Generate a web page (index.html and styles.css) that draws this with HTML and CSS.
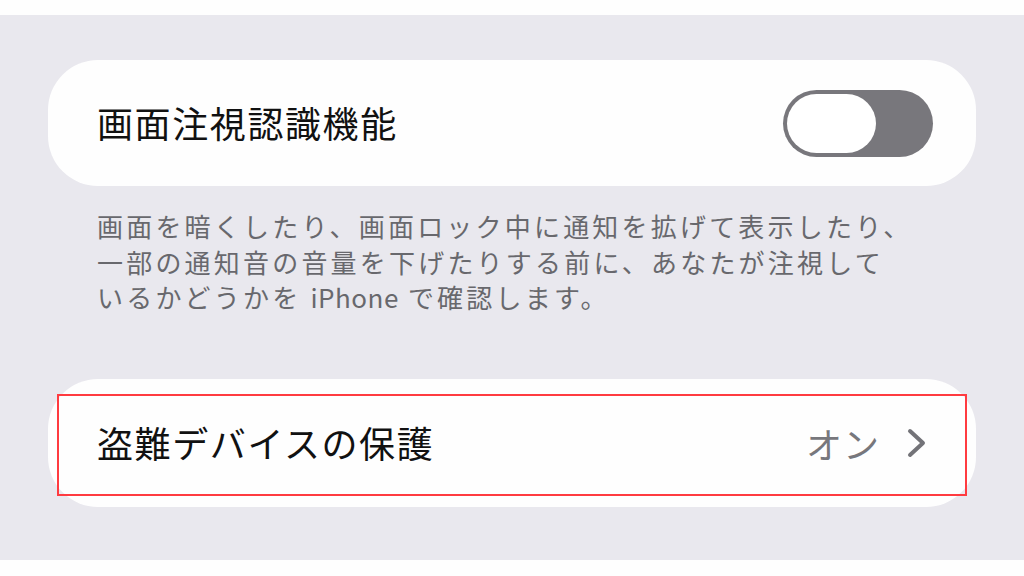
FILE: index.html
```html
<!DOCTYPE html>
<html lang="ja">
<head>
    <meta charset="UTF-8">
    <meta name="viewport" content="width=device-width, initial-scale=1.0">
    <title>Face ID とパスコード</title>
    <link rel="stylesheet" href="styles.css">
</head>
<body>
    <!-- 設定画面 -->
    <div class="settings">
        <!-- 画面注視認識機能 -->
        <div class="card">
            <span class="row-title">画面注視認識機能</span>
            <div class="toggle">
                <span class="knob"></span>
            </div>
        </div>

        <!-- 説明文 -->
        <p class="note">
            画面を暗くしたり、画面ロック中に通知を拡げて表示したり、<br>
            一部の通知音の音量を下げたりする前に、あなたが注視して<br>
            いるかどうかを <span class="latin">iPhone</span> で確認します。
        </p>

        <!-- 盗難デバイスの保護 -->
        <div class="card card-link">
            <span class="row-title">盗難デバイスの保護</span>
            <div class="row-value">
                <span>オン</span>
                <svg class="chevron" width="20" height="30" viewBox="0 0 20 30">
                    <polyline points="3,3 16,15 3,27" fill="none" stroke="currentColor" stroke-width="4" stroke-linecap="round" stroke-linejoin="round"/>
                </svg>
            </div>
            <!-- 注目枠 -->
            <div class="highlight"></div>
        </div>
    </div>
</body>
</html>
```

FILE: styles.css
```css
/* 基本 */
body {
    margin: 0;
    padding: 15px 0 16px;
    background: #fefefe;
    font-family: "Noto Sans CJK JP", "Noto Sans", sans-serif;
    color: #111111;
}

/* 灰色の背景 */
.settings {
    background: #e9e8ee;
    height: 545px;
    padding: 45px 48px 0;
    box-sizing: border-box;
}

/* 白いカード */
.card {
    position: relative;
    background: #fefefe;
    border-radius: 50px;
    height: 126px;
    padding: 0 43px 0 49px;
    display: flex;
    align-items: center;
    justify-content: space-between;
}

.row-title {
    font-size: 36px;
    letter-spacing: 1.6px;
    line-height: 1;
    margin-top: -2px;
}

/* スイッチ */
.toggle {
    width: 150px;
    height: 67px;
    background: #78777c;
    border-radius: 34px;
    padding: 4px;
    box-sizing: border-box;
}

.knob {
    display: block;
    width: 89px;
    height: 59px;
    background: #ffffff;
    border-radius: 30px;
}

/* 説明文 */
.note {
    margin: 22px 0 0;
    padding-left: 49px;
    font-size: 26px;
    line-height: 35.5px;
    letter-spacing: 3.2px;
    color: #68686d;
}

.note .latin {
    letter-spacing: 0.5px;
}

/* 盗難デバイスの保護 */
.card-link {
    margin-top: 64px;
    height: 128px;
    padding-right: 49px;
}

.row-value {
    display: flex;
    align-items: center;
    gap: 27px;
    font-size: 36px;
    letter-spacing: 1px;
    color: #77777c;
}

.chevron {
    color: #737378;
}

/* 赤い枠 */
.highlight {
    position: absolute;
    top: 15px;
    left: 9px;
    right: 9px;
    bottom: 11px;
    border: 2.5px solid #ff3b40;
}
```
